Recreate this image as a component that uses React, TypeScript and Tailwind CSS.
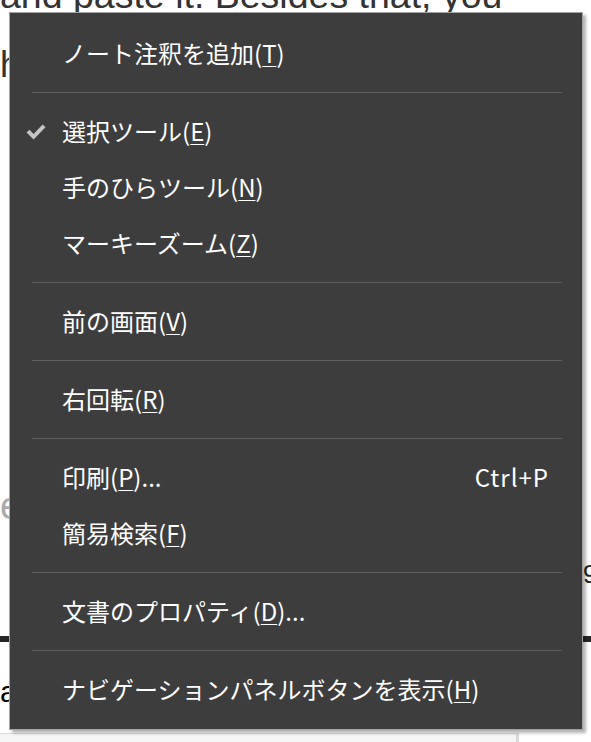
import React from 'react'

type Item = {
  label: string
  hotkey: string
  suffix?: string
  shortcut?: string
  checked?: boolean
}

// groups of the context menu, divided by separators
const groups: Item[][] = [
  [{ label: 'ノート注釈を追加', hotkey: 'T' }],
  [
    { label: '選択ツール', hotkey: 'E', checked: true },
    { label: '手のひらツール', hotkey: 'N' },
    { label: 'マーキーズーム', hotkey: 'Z' },
  ],
  [{ label: '前の画面', hotkey: 'V' }],
  [{ label: '右回転', hotkey: 'R' }],
  [
    { label: '印刷', hotkey: 'P', suffix: '...', shortcut: 'Ctrl+P' },
    { label: '簡易検索', hotkey: 'F' },
  ],
  [{ label: '文書のプロパティ', hotkey: 'D', suffix: '...' }],
  [{ label: 'ナビゲーションパネルボタンを表示', hotkey: 'H' }],
]

const uiFont = { fontFamily: '"Noto Sans CJK JP", "Noto Sans", sans-serif' }

function Check() {
  return (
    <svg width="22" height="18" viewBox="0 0 22 18" className="text-[#c4c4c4]">
      <path d="M1.5 9.5 L4.5 6.8 L8.6 11 L17.6 1.5 L20.5 4.2 L8.6 16.5 Z" fill="currentColor" />
    </svg>
  )
}

function MenuRow({ item }: { item: Item }) {
  return (
    <div className="relative flex items-center h-[56px] pl-[52px] pr-[33px] text-white text-[24px] leading-none">
      {item.checked && (
        <span className="absolute left-[15px] top-[20px]">
          <Check />
        </span>
      )}
      <span className="flex-1 whitespace-nowrap">
        {item.label}(<span className="underline underline-offset-[3px] decoration-1">{item.hotkey}</span>){item.suffix}
      </span>
      {item.shortcut && <span className="whitespace-nowrap tracking-[1px]">{item.shortcut}</span>}
    </div>
  )
}

function ContextMenu() {
  return (
    <div
      className="absolute left-[9px] top-[12px] w-[574px] bg-[#3d3d3d] border border-[#a3a3a3] py-[12px] shadow-[3px_3px_3px_rgba(0,0,0,0.3)]"
      style={uiFont}
    >
      {groups.map((group, gi) => (
        <div key={gi}>
          {gi > 0 && (
            <div className="pt-[11px] pb-[10px] pl-[22px] pr-[20px]">
              <div className="h-px bg-[#5f5f5f]" />
            </div>
          )}
          {group.map((item) => (
            <MenuRow key={item.label} item={item} />
          ))}
        </div>
      ))}
    </div>
  )
}

export default function App() {
  return (
    <div className="relative w-[591px] h-[742px] overflow-hidden bg-white" style={{ fontFamily: '"Liberation Sans", Arial, sans-serif' }}>
      {/* page content behind the menu */}
      <div className="flex flex-col h-full text-[#333]">
        <div className="-mt-[24px] h-[38px] text-[37.5px] leading-[38px] whitespace-nowrap">
          and paste it. Besides that, you
        </div>
        <div className="mt-[33px] h-[36px] text-[36px] leading-[36px] whitespace-nowrap">have</div>
        <div className="mt-[404px] h-[38px] text-[38px] leading-[38px] text-[#aaa] whitespace-nowrap">enter</div>
        <div className="mt-[37px] flex justify-end h-[25px] text-[25px] leading-[25px] text-[#222]">
          <span className="-mr-[6px]">9</span>
        </div>
        <div className="mt-[49px] h-[6px] bg-[#262626]" />
        <div className="mt-[35px] h-[30px] text-[30px] leading-[30px] text-black">as</div>
        <div className="mt-auto h-[9px] w-[519px] bg-[#f5f5f5] border-t border-r-[3px] border-[#dadada]" />
      </div>
      <ContextMenu />
    </div>
  )
}
